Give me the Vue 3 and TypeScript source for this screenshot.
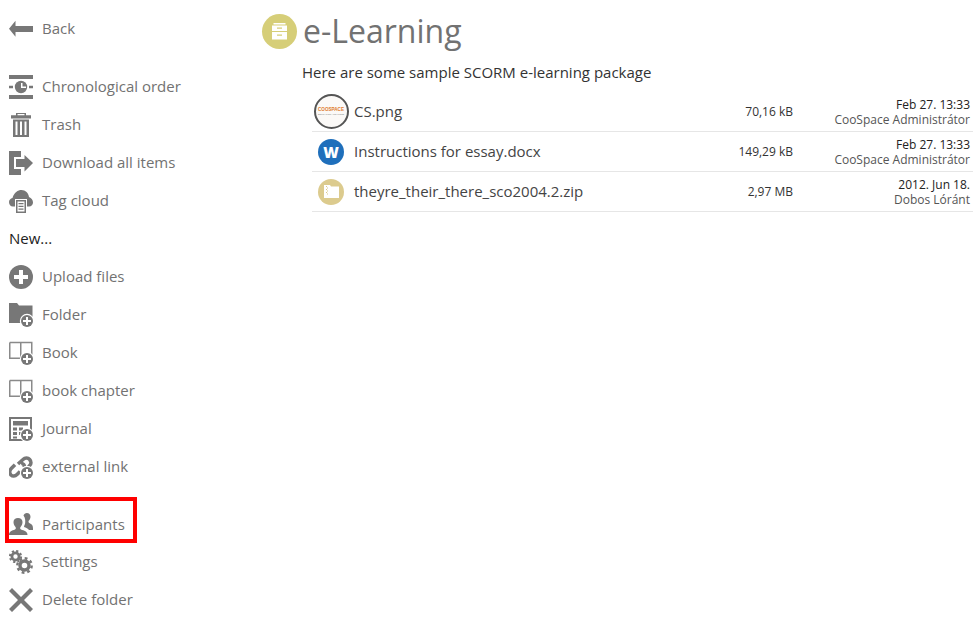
<script setup lang="ts">
interface NavItem { label: string; icon: string; plus?: boolean }
const top: NavItem[] = [
  { label: 'Chronological order', icon: 'clock' },
  { label: 'Trash', icon: 'trash' },
  { label: 'Download all items', icon: 'download' },
  { label: 'Tag cloud', icon: 'cloud' },
]
const create: NavItem[] = [
  { label: 'Upload files', icon: 'upload' },
  { label: 'Folder', icon: 'folder', plus: true },
  { label: 'Book', icon: 'book', plus: true },
  { label: 'book chapter', icon: 'book', plus: true },
  { label: 'Journal', icon: 'journal', plus: true },
  { label: 'external link', icon: 'link', plus: true },
]
const bottom: NavItem[] = [
  { label: 'Participants', icon: 'people' },
  { label: 'Settings', icon: 'gears' },
  { label: 'Delete folder', icon: 'x' },
]
const files = [
  { name: 'CS.png', size: '70,16 kB', date: 'Feb 27. 13:33', by: 'CooSpace Administrátor', kind: 'img' },
  { name: 'Instructions for essay.docx', size: '149,29 kB', date: 'Feb 27. 13:33', by: 'CooSpace Administrátor', kind: 'word' },
  { name: 'theyre_their_there_sco2004.2.zip', size: '2,97 MB', date: '2012. Jun 18.', by: 'Dobos Lóránt', kind: 'zip' },
]
</script>

<template>
  <div class="page">
    <nav class="side">
      <a class="item back">
        <svg class="ic" viewBox="0 0 24 24"><path d="M0 11.700 6.500 3.700V9H24V15H6.500V19.700Z" /></svg>
        <span>Back</span>
      </a>

      <div class="group">
        <a v-for="it in top" :key="it.label" class="item">
          <svg class="ic" viewBox="0 0 24 24">
            <template v-if="it.icon === 'clock'">
              <path d="M0 0H24V4H0ZM0 20H24V24H0ZM0 10.700H4V13.300H0ZM20 10.700H24V13.300H20Z" />
              <circle cx="12" cy="12" r="6.200" />
              <path d="M12 8H13.500V11.500H17V13H12Z" fill="#fff" />
            </template>
            <template v-else-if="it.icon === 'trash'">
              <path fill-rule="evenodd" d="M7 0H17V2.200H22V5.500H2V2.200H7ZM8.500 1V2.200H15.500V1ZM4 6.500H20V24H4ZM6.500 8.500V22H8.500V8.500ZM11 8.500V22H13V8.500ZM15.500 8.500V22H17.500V8.500Z" />
            </template>
            <template v-else-if="it.icon === 'download'">
              <path d="M0 0H12V6H5V18H12V24H0Z" />
              <path d="M7 8H15.500V4L24 12 15.500 20.500V16H7Z" />
            </template>
            <template v-else>
              <path d="M3.500 9C5 3.500 9 1 12.500 1 16.500 1 19.500 4 20 8 22.500 9 24 11 24 13.500 24 15.500 22.500 17.500 20 17.500H4C1.500 17.500 0 15.500 0 13 0 11 1.500 9.500 3.500 9Z" />
              <rect x="6" y="10" width="12" height="14" fill="#fff" />
              <rect x="7" y="11" width="10" height="13" />
              <rect x="8.500" y="12.500" width="7" height="10" fill="#fff" />
              <path d="M9.500 14H14.500V15.200H9.500ZM9.500 16.800H14.500V18H9.500ZM9.500 19.600H14.500V20.800H9.500Z" />
            </template>
          </svg>
          <span>{{ it.label }}</span>
        </a>
      </div>

      <div class="new-label">New...</div>

      <a v-for="it in create" :key="it.label" class="item">
        <svg class="ic" viewBox="0 0 24 24">
          <template v-if="it.icon === 'upload'">
            <circle cx="12" cy="12" r="12" />
            <path d="M10 5H14V10H19V14H14V19H10V14H5V10H10Z" fill="#fff" />
          </template>
          <template v-else-if="it.icon === 'folder'">
            <path d="M0 0H8L10 2.500H23.500V20H0Z" />
          </template>
          <template v-else-if="it.icon === 'book'">
            <path d="M.75 1.500H22.750V14M11.750 1.500V17M.75 1.500V17.250H13" fill="none" stroke="#8a8a8a" stroke-width="1.500" />
          </template>
          <template v-else-if="it.icon === 'journal'">
            <path fill-rule="evenodd" d="M0 0H23V14H18V24H0ZM2 2V22H16V12H21V2Z" />
            <path d="M4 4H19V8.500H4ZM4 10.500H8V13.500H4ZM10 10.500H14V13.500H10ZM4 15H8V18H4ZM10 15H14V18H10ZM4 19.500H8V21.500H4Z" />
          </template>
          <template v-else>
            <path d="M9 9 14 4.500C16 2.500 19 2.500 20.700 4.500 22.500 6.500 22.300 9 20.700 10.500L17.500 14" fill="none" stroke="#777" stroke-width="3.500" />
            <path d="M12 8.500C14 8 16 10 15 12.500M11 16.500 8 19.500C6 21.500 3.500 21.500 2 20 .3 18 .5 15.500 2 13.800L6 9.800" fill="none" stroke="#777" stroke-width="3.500" />
          </template>
          <g v-if="it.plus">
            <circle cx="18" cy="18" r="7.200" fill="#fff" />
            <circle cx="18" cy="18" r="6" />
            <path d="M17 14H19V17H22V19H19V22H17V19H14V17H17Z" fill="#fff" />
          </g>
        </svg>
        <span>{{ it.label }}</span>
      </a>

      <div class="group tail">
        <a v-for="it in bottom" :key="it.label" class="item">
          <svg class="ic" viewBox="0 0 24 24">
            <template v-if="it.icon === 'people'">
              <path d="M0 23C0 19.500 3 18.500 6 17.500 7 17 7 16 6.500 15 5 13.500 4.500 11.500 4.500 10 4.500 7.500 6.500 6 9 6S13.500 7.500 13.500 10C13.500 11.500 13 13.500 11.500 15 11 16 11 17 12 17.500 15 18.500 18.500 19.500 18.500 23Z" />
              <path d="M14.500 3.500C15 2 16.300 1 17.800 1 20 1 21.500 2.500 21.500 4.700 21.500 6.500 20.500 8 19.500 9 19.500 10.500 20 11 21 11.500 22.500 12.200 24 13 24 16.500V18H20C19 16.500 17 15.500 15 15 15 14 15.500 13 16 12 16.500 9.500 16.500 6 14.500 3.500Z" />
            </template>
            <template v-else-if="it.icon === 'gears'">
              <g fill="none" stroke="#777">
                <circle cx="6.500" cy="6.500" r="3.600" stroke-width="2.800" />
                <circle cx="6.500" cy="6.500" r="5.600" stroke-width="2" stroke-dasharray="2.200 2.200" />
                <circle cx="15.500" cy="15.500" r="4.500" stroke-width="3.400" />
                <circle cx="15.500" cy="15.500" r="7.200" stroke-width="2.400" stroke-dasharray="2.800 2.850" />
              </g>
            </template>
            <template v-else>
              <path d="M3 0 12 9 21 0 24 3 15 12 24 21 21 24 12 15 3 24 0 21 9 12 0 3Z" />
            </template>
          </svg>
          <span>{{ it.label }}</span>
        </a>
        <div class="mark"></div>
      </div>
    </nav>

    <main class="main">
      <header class="head">
        <span class="badge">
          <svg viewBox="0 0 17 17" width="17" height="17">
            <path fill="#fff" d="M2.500 0H14.500V1.500H2.500ZM1 2.500H16V8H1ZM1 9H16V16.500H1Z" />
            <path fill="#d6ce78" d="M6 4.500H11V5.700H6ZM6 11.500H11V12.700H6Z" />
          </svg>
        </span>
        <h1>e-Learning</h1>
      </header>
      <p class="desc">Here are some sample SCORM e-learning package</p>
      <ul class="files">
        <li v-for="f in files" :key="f.name" class="row">
          <span class="thumb">
            <span v-if="f.kind === 'img'" class="cs">
              <b>COOSPACE</b>
              <i>EDUCATION AND MORE</i>
            </span>
            <span v-else-if="f.kind === 'word'" class="word">W</span>
            <span v-else class="zip">
              <svg viewBox="0 0 15 13" width="15" height="13">
                <path fill="#fff" d="M0 0H6L7 1.500H15V13H0Z" />
                <path fill="#d9c88c" d="M2 1H3V2H2ZM3 2.500H4V3.500H3ZM2 4H3V5H2ZM3 5.500H4V6.500H3ZM2 7H3V8H2ZM3 8.500H4V9.500H3Z" />
              </svg>
            </span>
          </span>
          <span class="name">{{ f.name }}</span>
          <span class="size">{{ f.size }}</span>
          <span class="meta">
            <span class="date">{{ f.date }}</span>
            <span class="by">{{ f.by }}</span>
          </span>
        </li>
      </ul>
    </main>
  </div>
</template>

<style>
html, body { margin: 0; background: #fff; }
</style>

<style scoped>
.page {
  display: flex;
  width: 973px;
  height: 624px;
  overflow: hidden;
  font-family: "Open Sans", sans-serif;
  background: #fff;
}
.side {
  width: 250px;
  flex: none;
  padding-top: 9px;
  box-sizing: border-box;
}
.item {
  display: flex;
  align-items: center;
  height: 38px;
  padding-left: 9px;
  gap: 9px;
  font-size: 15px;
  color: #727272;
}
.ic { width: 24px; height: 24px; flex: none; fill: #777; margin-top: 2px; }
.tail .ic { margin-top: 0; }
.tail .item:nth-child(n+2) span { margin-top: -2px; }
.group { margin-top: 20px; }
.new-label {
  height: 38px;
  line-height: 38px;
  padding-left: 9px;
  font-size: 15px;
  color: #222;
}
.tail { position: relative; margin-top: 20px; }
.mark {
  position: absolute;
  left: 5px;
  top: -8px;
  width: 132px;
  height: 46px;
  box-sizing: border-box;
  border: 4px solid #f00;
}
.main { flex: 1; min-width: 0; padding: 14px 0 0 12px; }
.head { display: flex; align-items: center; gap: 6px; height: 34px; }
.badge {
  width: 35px;
  height: 35px;
  border-radius: 50%;
  background: #d6ce78;
  display: flex;
  align-items: center;
  justify-content: center;
}
h1 {
  margin: 0;
  font-size: 32px;
  font-weight: 400;
  color: #727272;
  line-height: 36px;
}
.desc {
  margin: 14px 0 0 40px;
  font-size: 15px;
  line-height: 20px;
  color: #333;
}
.files { list-style: none; margin: 10px 0 0 50px; padding: 0; }
.row {
  display: flex;
  align-items: center;
  height: 39px;
  border-bottom: 1px solid #e6e6e6;
  padding-right: 3px;
}
.thumb { width: 38px; margin-right: 4px; flex: none; display: flex; justify-content: center; }
.cs {
  width: 35px;
  height: 35px;
  box-sizing: border-box;
  border: 2px solid #555;
  border-radius: 50%;
  background: #fbf9f7;
  display: flex;
  flex-direction: column;
  align-items: center;
  justify-content: center;
  flex: none;
}
.cs b { font-size: 4.600px; line-height: 5px; color: #e07a2c; font-family: "Liberation Sans", sans-serif; }
.cs i { font-size: 2.300px; line-height: 4px; color: #888; font-style: normal; font-family: "Liberation Sans", sans-serif; white-space: nowrap; }
.word, .zip {
  width: 26px;
  height: 26px;
  border-radius: 50%;
  display: flex;
  align-items: center;
  justify-content: center;
}
.word { background: #1f6fbb; color: #fff; font-size: 15px; font-weight: 800; }
.zip { background: #dccb8e; }
.name { flex: 1; font-size: 15px; color: #444; padding-bottom: 2px; }
.size { font-size: 12px; color: #333; text-align: right; }
.meta {
  width: 177px;
  display: flex;
  flex-direction: column;
  align-items: flex-end;
  font-size: 12px;
  line-height: 15px;
}
.date { color: #222; }
.by { color: #555; }
</style>
